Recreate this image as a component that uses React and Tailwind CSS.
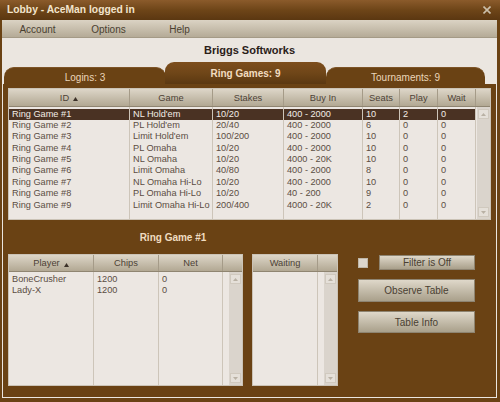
import React from "react";

const ringCols = [
  { label: "ID", w: "w-[121px]", sort: true },
  { label: "Game", w: "w-[83px]" },
  { label: "Stakes", w: "w-[71px]" },
  { label: "Buy In", w: "w-[79px]" },
  { label: "Seats", w: "w-[37px]" },
  { label: "Play", w: "w-[38px]" },
  { label: "Wait", w: "w-[38px]" },
];

const ringGames = [
  ["Ring Game #1", "NL Hold'em", "10/20", "400 - 2000", "10", "2", "0"],
  ["Ring Game #2", "PL Hold'em", "20/40", "400 - 2000", "6", "0", "0"],
  ["Ring Game #3", "Limit Hold'em", "100/200", "400 - 2000", "10", "0", "0"],
  ["Ring Game #4", "PL Omaha", "10/20", "400 - 2000", "10", "0", "0"],
  ["Ring Game #5", "NL Omaha", "10/20", "4000 - 20K", "10", "0", "0"],
  ["Ring Game #6", "Limit Omaha", "40/80", "400 - 2000", "8", "0", "0"],
  ["Ring Game #7", "NL Omaha Hi-Lo", "10/20", "400 - 2000", "10", "0", "0"],
  ["Ring Game #8", "PL Omaha Hi-Lo", "10/20", "40 - 200", "9", "0", "0"],
  ["Ring Game #9", "Limit Omaha Hi-Lo", "200/400", "4000 - 20K", "2", "0", "0"],
];

const playerCols = [
  { label: "Player", w: "w-[85px]", sort: true },
  { label: "Chips", w: "w-[65px]" },
  { label: "Net", w: "w-[64px]" },
];

const players = [
  ["BoneCrusher", "1200", "0"],
  ["Lady-X", "1200", "0"],
];

const waitCols = [{ label: "Waiting", w: "w-[65px]" }];

function SortArrow() {
  return (
    <svg width="5" height="4" viewBox="0 0 5 4" className="ml-[4px] mt-[1px]">
      <path d="M2.5 0 L5 4 L0 4 Z" fill="#3b3128" />
    </svg>
  );
}

function ArrowBox({ down }) {
  return (
    <div className="w-[11px] h-[10px] bg-[#e5e0d9] border border-[#d0c9be] flex items-center justify-center">
      <svg width="5" height="3" viewBox="0 0 5 3">
        <path d={down ? "M0 0 L5 0 L2.5 3 Z" : "M2.5 0 L5 3 L0 3 Z"} fill="#b9b1a4" />
      </svg>
    </div>
  );
}

function Row({ cols, values, selected, rowClass }) {
  return (
    <div className={`flex shrink-0 ${rowClass}`}>
      {cols.map((c, i) => (
        <div
          key={i}
          className={`${c.w} shrink-0 border-r border-[#cdc5b9] pl-[3px] whitespace-nowrap overflow-hidden ${
            selected ? "bg-[#4a3223] text-[#f3ede6]" : ""
          }`}
        >
          {values ? values[i] : ""}
        </div>
      ))}
    </div>
  );
}

function Grid({ cols, rows, scrollW, size, headH, rowClass, spacer, selected = -1 }) {
  return (
    <div className={`${size} flex flex-col border border-[#cbc3b6] bg-[#ece7e2] shrink-0`}>
      {/* header */}
      <div className={`${headH} flex shrink-0 bg-linear-to-b from-[#ddd6c8] to-[#b2a893] border-b border-[#8f8571] text-[#4d4236] text-[9.3px]`}>
        {cols.map((c) => (
          <div key={c.label} className={`${c.w} shrink-0 border-r border-[#a59b88] flex items-center justify-center pt-[2px]`}>
            {c.label}
            {c.sort && <SortArrow />}
          </div>
        ))}
        <div className={`${scrollW} shrink-0`} />
      </div>
      {/* body */}
      <div className="flex flex-1 min-h-0 text-[9.2px] text-[#5b4d43]">
        <div className="flex flex-col">
          <Row cols={cols} rowClass={spacer} />
          {rows.map((r, i) => (
            <Row key={i} cols={cols} values={r} selected={i === selected} rowClass={rowClass} />
          ))}
          <Row cols={cols} rowClass="flex-1" />
        </div>
        <div className={`${scrollW} shrink-0 flex justify-end`}>
          <div className="w-[13px] bg-[#dad4cc] flex flex-col justify-between items-center py-[2px]">
            <ArrowBox />
            <ArrowBox down />
          </div>
        </div>
      </div>
    </div>
  );
}

function Button({ size, children }) {
  return (
    <button className={`${size} flex items-center justify-center bg-linear-to-b from-[#dfd8ca] to-[#a9a08b] border border-[#8e8471] text-[10px] text-[#4a4032]`}>
      {children}
    </button>
  );
}

export default function App() {
  return (
    <div className="w-[500px] h-[402px] bg-[#6a4214] flex flex-col font-['Liberation_Sans',Arial,sans-serif] overflow-hidden">
      {/* title bar */}
      <div className="h-[20px] shrink-0 flex items-center justify-between pl-[7px] pr-[9px] bg-linear-to-b from-[#8b5b2b] via-[#6e4518] to-[#5b3711]">
        <span className="text-[10.3px] font-bold text-[#f2e4cc]">Lobby - AceMan logged in</span>
        <svg width="8" height="8" viewBox="0 0 8 8">
          <path d="M0.5 0.5 L7.5 7.5 M7.5 0.5 L0.5 7.5" stroke="#cbbfaa" strokeWidth="1.6" />
        </svg>
      </div>

      {/* window content */}
      <div className="ml-[2px] mr-[3px] h-[378px] bg-[#ebe6e0] flex flex-col">
        {/* menu bar */}
        <div className="h-[18px] shrink-0 flex bg-linear-to-b from-[#dbd3c4] to-[#b5ab97] border-b border-[#a49a86] text-[10px] text-[#4a3f30]">
          {["Account", "Options", "Help"].map((m) => (
            <div key={m} className="w-[71px] flex items-center justify-center pt-[1px]">
              {m}
            </div>
          ))}
        </div>

        <div className="h-[24px] shrink-0 flex items-center justify-center text-[11px] font-bold text-[#2a2018]">
          Briggs Softworks
        </div>

        {/* tabs */}
        <div className="h-[22px] shrink-0 flex items-end pl-[2px]">
          <div className="w-[162px] h-[17px] rounded-t-[10px] bg-[#6a4214] border-t border-[#7d5427] flex items-center justify-center pt-[2px] text-[10px] text-[#ead6ba]">
            Logins: 3
          </div>
          <div className="-ml-[1px] w-[161px] h-[22px] rounded-t-[9px] bg-linear-to-b from-[#7d4e1d] via-[#6f4618] to-[#5b3811] flex items-center justify-center pt-[1px] text-[10px] font-bold text-[#f2dcc0]">
            Ring Games: 9
          </div>
          <div className="w-[159px] h-[17px] rounded-t-[10px] bg-[#6a4214] border-t border-[#7d5427] flex items-center justify-center pt-[2px] text-[10px] text-[#ead6ba]">
            Tournaments: 9
          </div>
        </div>

        {/* panel */}
        <div className="mx-[1px] h-[313px] shrink-0 bg-[#6a4214] pt-[4px] pl-[5px] flex flex-col">
          <Grid
            cols={ringCols}
            rows={ringGames}
            selected={0}
            scrollW="w-[14px]"
            size="w-[483px] h-[132px]"
            headH="h-[18px]"
            rowClass="h-[11.4px] leading-[11.4px]"
            spacer="h-[1.5px]"
          />

          <div className="w-[330px] h-[34px] shrink-0 flex items-center justify-center pt-[1px] text-[10px] font-bold text-[#f0dcc0]">
            Ring Game #1
          </div>

          <div className="flex">
            <Grid
              cols={playerCols}
              rows={players}
              scrollW="w-[19px]"
              size="w-[235px] h-[132px]"
              headH="h-[17px]"
              rowClass="h-[11px] leading-[11px]"
              spacer="h-[2px]"
            />
            <div className="ml-[9px]">
              <Grid
                cols={waitCols}
                rows={[]}
                scrollW="w-[19px]"
                size="w-[86px] h-[132px]"
                headH="h-[17px]"
                rowClass="h-[11px]"
                spacer="h-[2px]"
              />
            </div>

            <div className="ml-[20px] pt-[1px] flex flex-col gap-[9px]">
              <div className="flex items-center gap-[11px]">
                <div className="w-[10px] h-[10px] bg-[#dcd6cd] border border-[#bfb7a9]" />
                <Button size="w-[96px] h-[15px]">Filter is Off</Button>
              </div>
              <Button size="w-[117px] h-[23px]">Observe Table</Button>
              <Button size="w-[117px] h-[22px]">Table Info</Button>
            </div>
          </div>
        </div>
      </div>
    </div>
  );
}
